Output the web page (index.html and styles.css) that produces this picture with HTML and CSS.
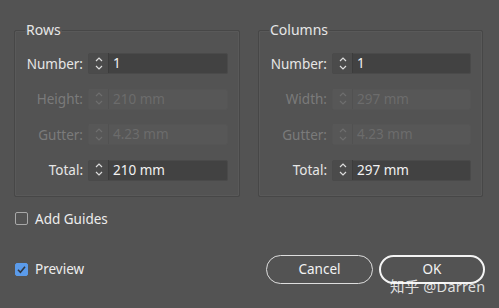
FILE: index.html
```html
<!DOCTYPE html>
<html>
  <head>
    <title>New Guide Layout</title>
    <link rel="stylesheet" href="styles.css">
  </head>
  <body>
    <div class="dialog">
      <div class="panels">
        <fieldset class="panel">
          <legend>Rows</legend>
          <div class="fields">
            <label class="field-label">Number:</label>
            <div class="field">
              <span class="stepper">
                <svg width="10" height="21" viewBox="0 0 10 21"><path d="M2 8 L5 5 L8 8 M2 13 L5 16 L8 13"/></svg>
              </span>
              <span class="value">1</span>
            </div>

            <label class="field-label disabled">Height:</label>
            <div class="field disabled">
              <span class="stepper">
                <svg width="10" height="21" viewBox="0 0 10 21"><path d="M2 8 L5 5 L8 8 M2 13 L5 16 L8 13"/></svg>
              </span>
              <span class="value">210 mm</span>
            </div>

            <label class="field-label disabled">Gutter:</label>
            <div class="field disabled">
              <span class="stepper">
                <svg width="10" height="21" viewBox="0 0 10 21"><path d="M2 8 L5 5 L8 8 M2 13 L5 16 L8 13"/></svg>
              </span>
              <span class="value">4.23 mm</span>
            </div>

            <label class="field-label">Total:</label>
            <div class="field">
              <span class="stepper">
                <svg width="10" height="21" viewBox="0 0 10 21"><path d="M2 8 L5 5 L8 8 M2 13 L5 16 L8 13"/></svg>
              </span>
              <span class="value">210 mm</span>
            </div>
          </div>
        </fieldset>

        <fieldset class="panel">
          <legend>Columns</legend>
          <div class="fields">
            <label class="field-label">Number:</label>
            <div class="field">
              <span class="stepper">
                <svg width="10" height="21" viewBox="0 0 10 21"><path d="M2 8 L5 5 L8 8 M2 13 L5 16 L8 13"/></svg>
              </span>
              <span class="value">1</span>
            </div>

            <label class="field-label disabled">Width:</label>
            <div class="field disabled">
              <span class="stepper">
                <svg width="10" height="21" viewBox="0 0 10 21"><path d="M2 8 L5 5 L8 8 M2 13 L5 16 L8 13"/></svg>
              </span>
              <span class="value">297 mm</span>
            </div>

            <label class="field-label disabled">Gutter:</label>
            <div class="field disabled">
              <span class="stepper">
                <svg width="10" height="21" viewBox="0 0 10 21"><path d="M2 8 L5 5 L8 8 M2 13 L5 16 L8 13"/></svg>
              </span>
              <span class="value">4.23 mm</span>
            </div>

            <label class="field-label">Total:</label>
            <div class="field">
              <span class="stepper">
                <svg width="10" height="21" viewBox="0 0 10 21"><path d="M2 8 L5 5 L8 8 M2 13 L5 16 L8 13"/></svg>
              </span>
              <span class="value">297 mm</span>
            </div>
          </div>
        </fieldset>
      </div>

      <div class="check-row guides">
        <span class="checkbox"></span>
        <span>Add Guides</span>
      </div>

      <div class="footer">
        <div class="check-row">
          <span class="checkbox checked">
            <svg width="13" height="13" viewBox="0 0 13 13"><path d="M3 6.8 L5.4 9.2 L10 3.8"/></svg>
          </span>
          <span>Preview</span>
        </div>
        <div class="buttons">
          <button class="btn">Cancel</button>
          <button class="btn btn-default">OK</button>
        </div>
      </div>

      <div class="watermark">知乎 @Darren</div>
    </div>
  </body>
</html>
```

FILE: styles.css
```css
* {
  box-sizing: border-box;
}

body {
  margin: 0;
  width: 499px;
  height: 308px;
  background: #535353;
  font-family: "Noto Sans", "Noto Sans CJK SC", sans-serif;
  font-size: 13px;
  color: #e6e6e6;
  overflow: hidden;
}

.dialog {
  position: relative;
  height: 100%;
  padding: 22px 15px 0 14px;
}

.panels {
  display: grid;
  grid-template-columns: 226px 225px;
  gap: 18px;
}

.panel {
  margin: 0;
  min-width: 0;
  padding: 15px 11px 15px 10px;
  border: 1px solid #474747;
  border-radius: 2px;
  box-shadow: inset 0 0 0 1px rgba(255, 255, 255, 0.04);
}

.panel legend {
  padding: 0 1px;
  font-size: 14px;
  line-height: 16px;
  color: #e6e6e6;
}

.fields {
  display: grid;
  grid-template-columns: 58px 1fr;
  column-gap: 5px;
  row-gap: 14.5px;
  align-items: center;
}

.field-label {
  text-align: right;
  font-size: 13.5px;
  color: #e6e6e6;
}

.field-label.disabled {
  color: #7b7b7b;
}

.field {
  display: flex;
  height: 21px;
  border: 1px solid #4a4a4a;
  border-radius: 2px;
  background: #424242;
}

.stepper {
  width: 20px;
  flex-shrink: 0;
  display: flex;
  align-items: center;
  justify-content: center;
  background: #4b4b4b;
  border-right: 1px solid #3c3c3c;
  margin-top: -1px;
}

.stepper svg path {
  fill: none;
  stroke: #dcdcdc;
  stroke-width: 1.2;
}

.value {
  padding-left: 4px;
  font-size: 13.5px;
  line-height: 19px;
  color: #f2f2f2;
}

.field.disabled {
  background: #575757;
  border-color: #555555;
}

.field.disabled .stepper {
  background: #575757;
  border-right-color: #515151;
}

.field.disabled .stepper svg path {
  stroke: #6e6e6e;
}

.field.disabled .value {
  color: #6c6c6c;
}

.check-row {
  display: flex;
  align-items: center;
  gap: 7px;
  font-size: 13.5px;
  color: #ededed;
}

.guides {
  margin-top: 13px;
  padding-left: 1px;
}

.checkbox {
  width: 13px;
  height: 13px;
  border: 1px solid #a8a8a8;
  border-radius: 2px;
  display: flex;
}

.checkbox.checked {
  background: #5b9bea;
  border-color: #5b9bea;
}

.checkbox svg {
  margin: -1px;
}

.checkbox svg path {
  fill: none;
  stroke: #2f3640;
  stroke-width: 1.6;
}

.footer {
  display: flex;
  align-items: center;
  justify-content: space-between;
  margin-top: 27px;
  padding-left: 1px;
}

.buttons {
  display: flex;
  gap: 6px;
  margin-right: -1px;
}

.btn {
  height: 29px;
  width: 107px;
  border: 1.5px solid #dedede;
  border-radius: 15px;
  background: transparent;
  color: #f4f4f4;
  font-family: "Noto Sans", sans-serif;
  font-size: 13.5px;
  line-height: 14px;
  padding: 0;
  cursor: pointer;
}

.btn-default {
  width: 106px;
  border: 2.5px solid #f4f4f4;
}

.watermark {
  position: absolute;
  left: 390px;
  top: 279px;
  font-size: 14.5px;
  line-height: 15px;
  color: rgba(255, 255, 255, 0.82);
  letter-spacing: 0.2px;
}
```
